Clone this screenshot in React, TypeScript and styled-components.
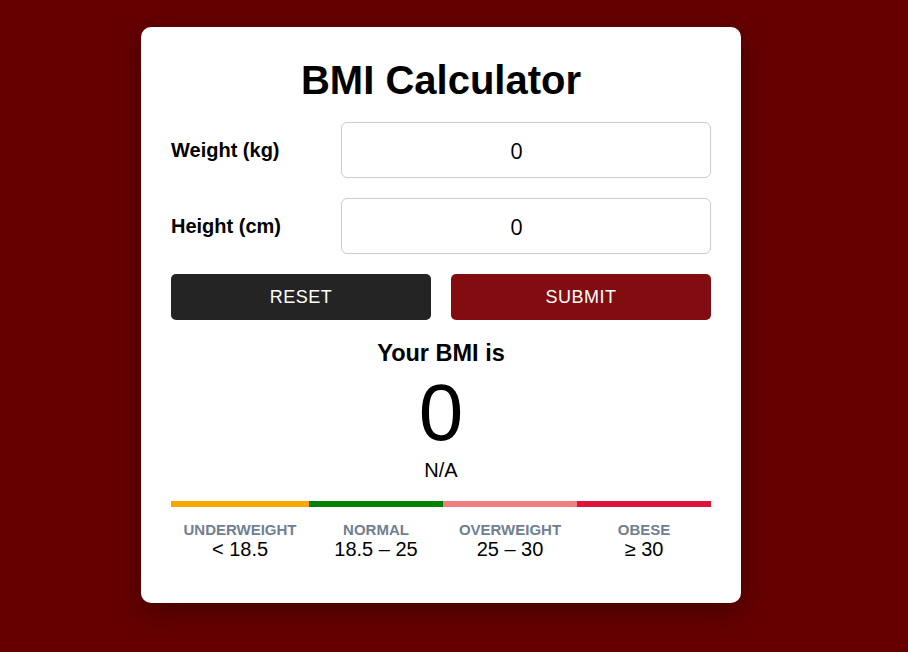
import React, { useState } from "react";
import styled, { createGlobalStyle } from "styled-components";

const GlobalStyle = createGlobalStyle`
    html, body {
        margin: 0;
        padding: 0;
        background: #660000;
        font-family: "Liberation Sans", Arial, sans-serif;
    }
    * {
        box-sizing: border-box;
    }
`;

const Page = styled.main`
    min-height: 652px;
    display: flex;
    align-items: flex-start;
    padding: 27px 0 0 141px;
`;

const Card = styled.section`
    width: 600px;
    background: #ffffff;
    border-radius: 10px;
    box-shadow: 0 8px 28px rgba(0, 0, 0, 0.35);
    padding: 30px 30px 42px;
    display: flex;
    flex-direction: column;
`;

const Title = styled.h1`
    margin: 0 0 19px;
    font-size: 40px;
    font-weight: 700;
    text-align: center;
    color: #000;
    line-height: 46px;
`;

const FieldRow = styled.label`
    display: grid;
    grid-template-columns: 170px 1fr;
    align-items: center;
    margin-bottom: 20px;
`;

const FieldLabel = styled.span`
    font-size: 20px;
    font-weight: 700;
    color: #000;
`;

const NumberInput = styled.input`
    height: 56px;
    width: 100%;
    border: 1px solid #cccccc;
    border-radius: 6px;
    padding: 0 6px 0 2px;
    text-align: center;
    font-family: "Open Sans", sans-serif;
    font-size: 22px;
    color: #000;
    outline: none;
    background: #fff;
`;

const ButtonRow = styled.div`
    display: grid;
    grid-template-columns: 1fr 1fr;
    gap: 20px;
    margin-bottom: 21px;
`;

const ActionButton = styled.button<{ $primary?: boolean }>`
    height: 46px;
    border: none;
    border-radius: 5px;
    background: ${(p) => (p.$primary ? "#830c10" : "#242424")};
    color: #ffffff;
    font-family: "Liberation Sans", Arial, sans-serif;
    font-size: 18px;
    letter-spacing: 0.5px;
    text-transform: uppercase;
    cursor: pointer;
`;

const Result = styled.div`
    display: flex;
    flex-direction: column;
    align-items: center;
    color: #000;
`;

const ResultHeading = styled.div`
    font-size: 23.5px;
    font-weight: 700;
    line-height: 25px;
`;

const ResultValue = styled.div`
    font-size: 80px;
    line-height: 93px;
`;

const ResultCategory = styled.div`
    font-size: 20px;
    line-height: 23px;
`;

const Scale = styled.div`
    display: grid;
    grid-template-columns: 138px 1fr 1fr 1fr;
    margin-top: 19px;
`;

const Segment = styled.div<{ $color: string }>`
    border-top: 6px solid ${(p) => p.$color};
    padding-top: 14px;
    text-align: center;
`;

const SegmentName = styled.div`
    font-size: 15px;
    font-weight: 700;
    color: #708090;
    text-transform: uppercase;
    line-height: 17px;
`;

const SegmentRange = styled.div`
    font-size: 20px;
    line-height: 23px;
    color: #000;
`;

const ranges = [
    { name: "Underweight", range: "< 18.5", color: "#ffa500" },
    { name: "Normal", range: "18.5 – 25", color: "#008000" },
    { name: "Overweight", range: "25 – 30", color: "#f08080" },
    { name: "Obese", range: "≥ 30", color: "#dc143c" },
];

const App = () => {
    const [weight, setWeight] = useState("0");
    const [height, setHeight] = useState("0");

    return (
        <>
            <GlobalStyle />
            <Page>
                <Card>
                    <Title>BMI Calculator</Title>
                    <FieldRow>
                        <FieldLabel>Weight (kg)</FieldLabel>
                        <NumberInput type="number" value={weight} onChange={(e) => setWeight(e.target.value)} />
                    </FieldRow>
                    <FieldRow>
                        <FieldLabel>Height (cm)</FieldLabel>
                        <NumberInput type="number" value={height} onChange={(e) => setHeight(e.target.value)} />
                    </FieldRow>
                    <ButtonRow>
                        <ActionButton>Reset</ActionButton>
                        <ActionButton $primary>Submit</ActionButton>
                    </ButtonRow>
                    <Result>
                        <ResultHeading>Your BMI is</ResultHeading>
                        <ResultValue>0</ResultValue>
                        <ResultCategory>N/A</ResultCategory>
                    </Result>
                    <Scale>
                        {ranges.map((r) => (
                            <Segment key={r.name} $color={r.color}>
                                <SegmentName>{r.name}</SegmentName>
                                <SegmentRange>{r.range}</SegmentRange>
                            </Segment>
                        ))}
                    </Scale>
                </Card>
            </Page>
        </>
    );
};

export default App;
